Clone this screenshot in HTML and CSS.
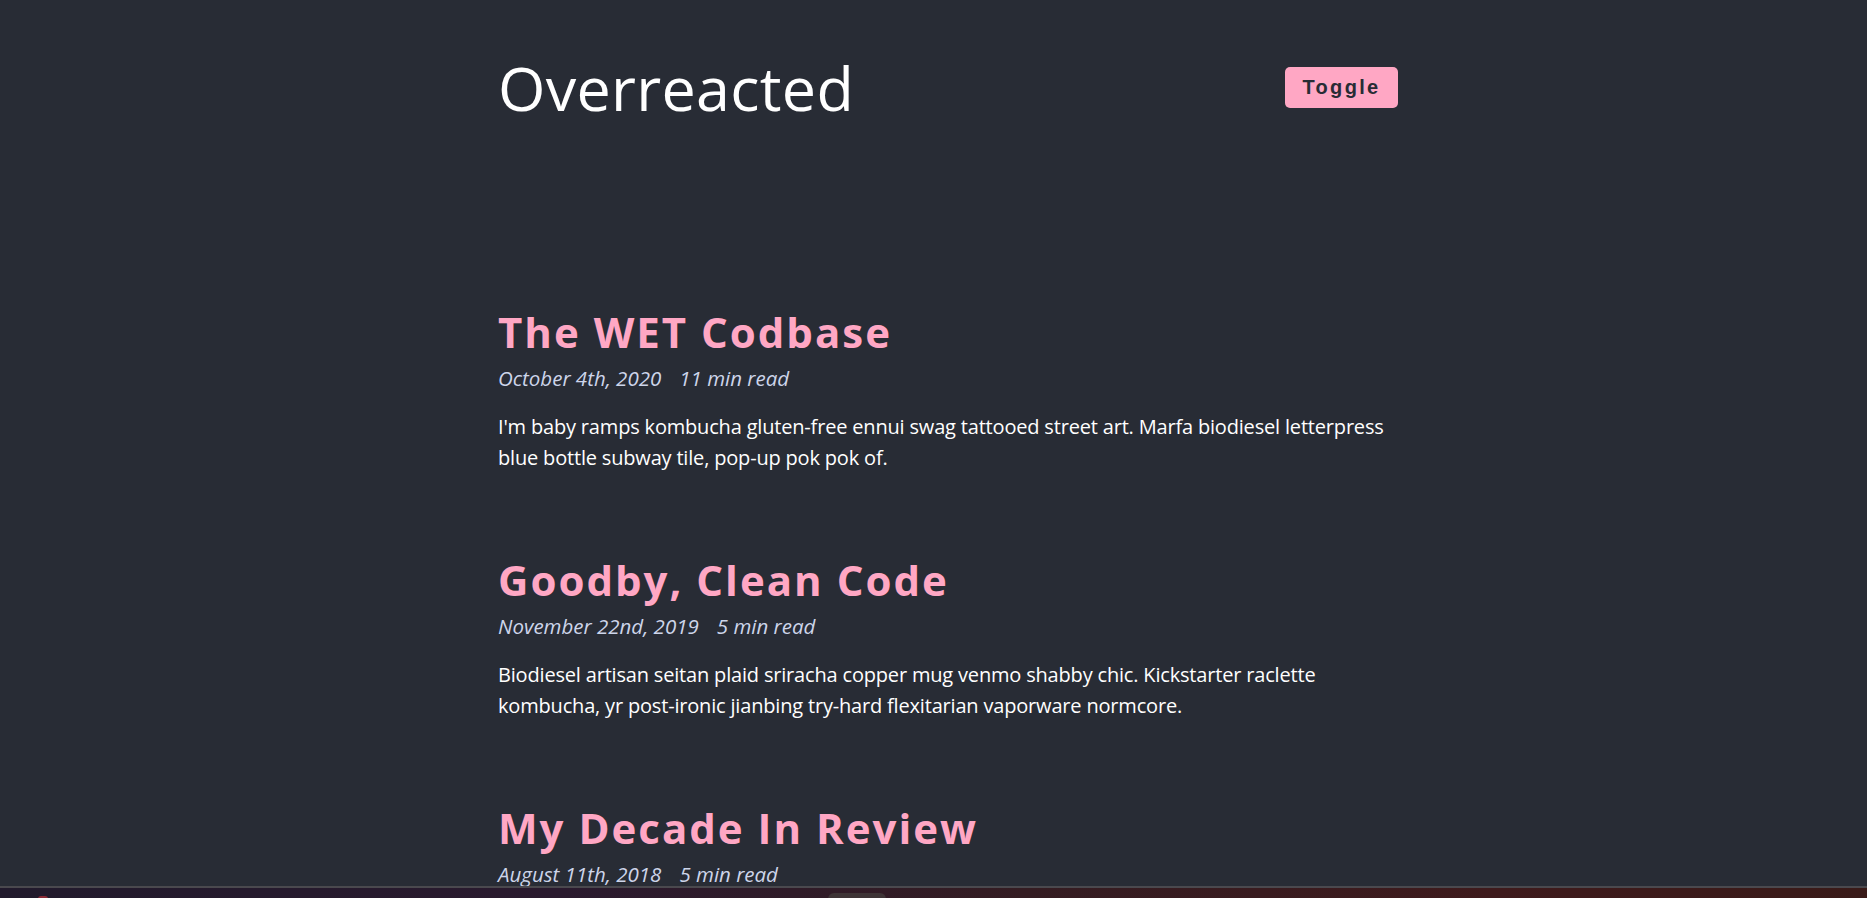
FILE: index.html
```html
<!DOCTYPE html>
<html lang="en">
<head>
<meta charset="utf-8">
<title>Overreacted</title>
<link rel="stylesheet" href="styles.css">
</head>
<body>
<div class="page">
  <header class="header">
    <h1 class="site-title">Overreacted</h1>
    <button class="toggle">Toggle</button>
  </header>
  <main class="posts">
    <article class="post">
      <h3 class="post-title">The WET Codbase</h3>
      <div class="post-meta"><span>October 4th, 2020</span><span>11 min read</span></div>
      <p class="post-excerpt">I'm baby ramps kombucha gluten-free ennui swag tattooed street art. Marfa biodiesel letterpress blue bottle subway tile, pop-up pok pok of.</p>
    </article>
    <article class="post">
      <h3 class="post-title">Goodby, Clean Code</h3>
      <div class="post-meta"><span>November 22nd, 2019</span><span>5 min read</span></div>
      <p class="post-excerpt">Biodiesel artisan seitan plaid sriracha copper mug venmo shabby chic. Kickstarter raclette kombucha, yr post-ironic jianbing try-hard flexitarian vaporware normcore.</p>
    </article>
    <article class="post">
      <h3 class="post-title">My Decade In Review</h3>
      <div class="post-meta"><span>August 11th, 2018</span><span>5 min read</span></div>
      <p class="post-excerpt">Biodiesel artisan seitan plaid sriracha copper mug venmo shabby chic. Kickstarter raclette kombucha, yr post-ironic jianbing try-hard flexitarian vaporware normcore.</p>
    </article>
  </main>
</div>
<div class="taskbar">
  <span class="taskbar-icon"></span>
  <span class="taskbar-tab"></span>
</div>
</body>
</html>
```
FILE: styles.css
```css
html, body {
  margin: 0;
  padding: 0;
}
body {
  background: #282c35;
  color: #ffffff;
  font-family: "Open Sans", "Noto Sans", sans-serif;
  padding-left: 29px;
  overflow: hidden;
  height: 898px;
}
.page {
  width: 900px;
  margin: 0 auto;
}
.header {
  display: flex;
  justify-content: space-between;
  align-items: center;
  padding-top: 56px;
}
.site-title {
  margin: 0;
  font-size: 61px;
  line-height: 63px;
  font-weight: 400;
  letter-spacing: 0.3px;
  color: #ffffff;
}
.toggle {
  width: 113px;
  height: 41px;
  background: #ffa7c4;
  border: none;
  border-radius: 5px;
  color: #282c35;
  font-family: "Liberation Sans", Arial, sans-serif;
  font-weight: bold;
  font-size: 20px;
  letter-spacing: 2.3px;
  padding: 0;
}
.posts {
  padding-top: 187px;
}
.post {
  margin-bottom: 81px;
}
.post-title {
  margin: 0;
  font-size: 42px;
  line-height: 52px;
  font-weight: 700;
  letter-spacing: 2px;
  color: #ffa7c4;
}
.post-meta {
  margin-top: 6px;
  font-size: 20.5px;
  line-height: 28px;
  font-style: italic;
  color: #cdd5ea;
  display: flex;
  gap: 18px;
}
.post-excerpt {
  margin: 19px 0 0;
  font-size: 20px;
  letter-spacing: -0.18px;
  line-height: 31px;
}
.taskbar {
  position: fixed;
  left: 0;
  right: 0;
  bottom: 0;
  height: 10px;
  border-top: 2px solid #4a494e;
  background: linear-gradient(90deg, #211a2c 0%, #2a1a2e 30%, #341c22 55%, #3e1a1c 80%, #391a18 100%);
}
.taskbar-icon {
  position: absolute;
  left: 38px;
  top: 8px;
  width: 10px;
  height: 4px;
  background: #8a2a36;
  border-radius: 3px 3px 0 0;
}
.taskbar-tab {
  position: absolute;
  left: 828px;
  top: 5px;
  width: 58px;
  height: 8px;
  background: #3e3436;
  border-radius: 6px 6px 0 0;
}
```
